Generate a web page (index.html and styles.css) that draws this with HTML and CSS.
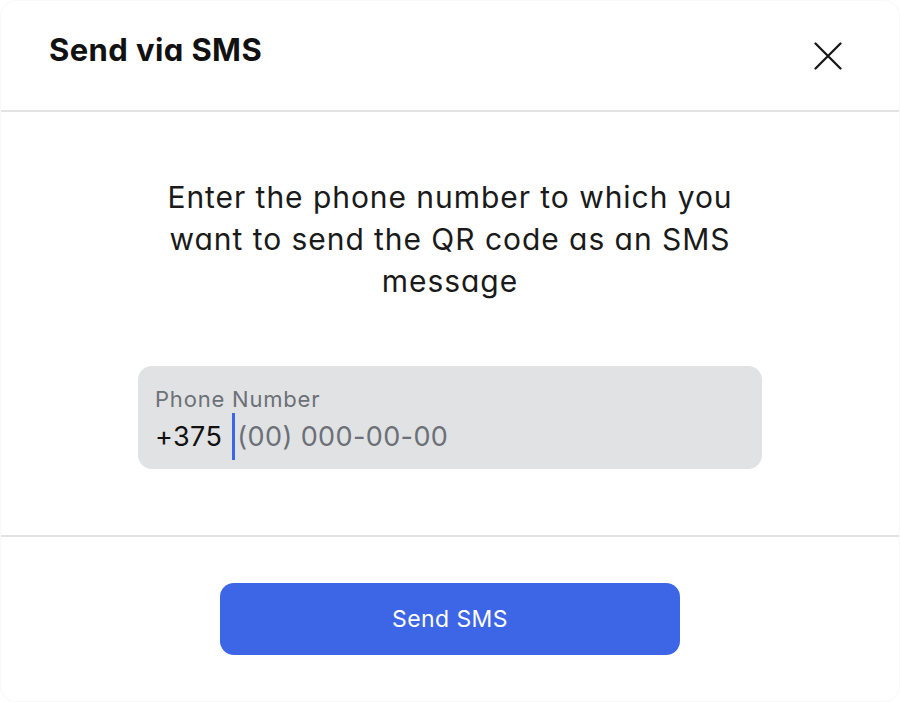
FILE: index.html
```html
<!DOCTYPE html>
<html lang="en">
<head>
<meta charset="utf-8">
<title>Send via SMS</title>
<link rel="stylesheet" href="styles.css">
</head>
<body>
<div class="modal">
  <header class="modal-header">
    <h1 class="modal-title">Send via SMS</h1>
    <button class="close-btn" aria-label="Close">
      <svg width="28" height="28" viewBox="0 0 28 28" fill="none" stroke="#141414" stroke-width="2.2" stroke-linecap="round">
        <path d="M1.5 1.5 L26.5 26.5 M26.5 1.5 L1.5 26.5"/>
      </svg>
    </button>
  </header>
  <main class="modal-body">
    <p class="intro">Enter the phone number to which you want to send the QR code as an SMS message</p>
    <div class="field">
      <div class="field-label">Phone Number</div>
      <div class="field-value"><span class="prefix">+375</span><span class="caret"></span><span class="placeholder">(00) 000-00-00</span></div>
    </div>
  </main>
  <footer class="modal-footer">
    <button class="send-btn">Send SMS</button>
  </footer>
</div>
</body>
</html>
```
FILE: styles.css
```css
* { box-sizing: border-box; }
html, body { margin: 0; padding: 0; background: #ffffff; }
body {
  font-family: Inter, "Liberation Sans", sans-serif;
  font-feature-settings: "cv11" 1;
  color: #161616;
}
.modal {
  height: 702px;
  border: 1px solid #f8f8f8;
  border-radius: 16px;
  background: #fff;
  display: flex;
  flex-direction: column;
}
.modal-header {
  height: 111px;
  border-bottom: 2px solid #e2e2e2;
  display: flex;
  justify-content: space-between;
  align-items: flex-start;
  padding: 27px 51px 0 48px;
}
.modal-title {
  margin: 0;
  font-size: 31px;
  line-height: 44px;
  font-weight: 700;
  color: #111;
  letter-spacing: 0.4px;
}
.close-btn {
  width: 40px;
  height: 40px;
  margin-top: 8px;
  padding: 0;
  border: 0;
  background: none;
  display: flex;
  align-items: center;
  justify-content: center;
}
.modal-body {
  height: 425px;
  border-bottom: 2px solid #e2e2e2;
  padding: 64px 137px 0;
  display: flex;
  flex-direction: column;
  align-items: center;
}
.intro {
  margin: 0;
  width: 600px;
  text-align: center;
  font-size: 30px;
  line-height: 42px;
  font-weight: 400;
  letter-spacing: 0.95px;
  color: #1a1a1a;
}
.field {
  margin-top: 64px;
  width: 624px;
  height: 103px;
  background: #e1e2e4;
  border-radius: 14px;
  padding: 19px 17px 9px;
}
.field-label {
  font-size: 22px;
  line-height: 28px;
  letter-spacing: 0.8px;
  color: #6c7077;
}
.field-value {
  height: 47px;
  display: flex;
  align-items: center;
  font-size: 27px;
  letter-spacing: 0.4px;
}
.prefix { color: #111; margin-right: 10px; }
.caret {
  width: 3px;
  height: 47px;
  background: #3c66e6;
  margin-right: 2px;
}
.placeholder { color: #6c7077; }
.modal-footer {
  display: flex;
  justify-content: center;
  padding-top: 46px;
}
.send-btn {
  width: 460px;
  height: 72px;
  border: 0;
  border-radius: 14px;
  background: #3c66e6;
  color: #fff;
  font-family: inherit;
  font-feature-settings: "cv11" 1;
  font-size: 23px;
  letter-spacing: 0.4px;
  font-weight: 400;
}
```
